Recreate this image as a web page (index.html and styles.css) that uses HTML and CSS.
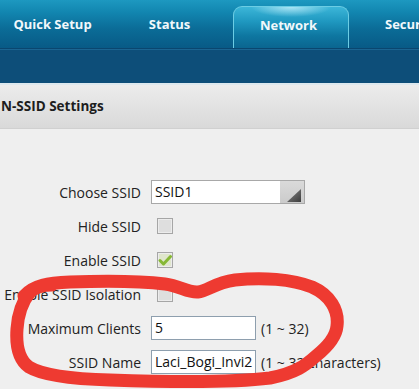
FILE: index.html
```html
<!DOCTYPE html>
<html>
<head>
<meta charset="utf-8">
<link rel="stylesheet" href="styles.css">
</head>
<body>
<div class="page">
  <nav class="nav">
    <div class="tab t1">Quick Setup</div>
    <div class="tab t2">Status</div>
    <div class="tab t3 active">Network</div>
    <div class="tab t4">Security</div>
  </nav>
  <div class="navline"></div>
  <div class="subbar"></div>
  <div class="sepline"></div>
  <div class="header">N-SSID Settings</div>
  <div class="content">
    <form class="form">
      <label class="lbl">Choose SSID</label>
      <div class="ctl">
        <div class="select">
          <span class="sel-val">SSID1</span>
          <span class="sel-btn"><svg width="14" height="13" viewBox="0 0 14 13"><defs><linearGradient id="tg" x1="0" y1="0" x2="1" y2="1"><stop offset="0" stop-color="#8a8a8a"/><stop offset="1" stop-color="#3c3c3c"/></linearGradient></defs><polygon points="14,0 14,13 0,13" fill="url(#tg)"/></svg></span>
        </div>
      </div>

      <label class="lbl">Hide SSID</label>
      <div class="ctl"><span class="cb"></span></div>

      <label class="lbl">Enable SSID</label>
      <div class="ctl"><span class="cb checked"><svg width="14" height="14" viewBox="0 0 14 14"><path d="M2 7.5 L5.5 11 L12.5 3.5" fill="none" stroke="#86b834" stroke-width="3" stroke-linecap="round" stroke-linejoin="round"/></svg></span></div>

      <label class="lbl">Enable SSID Isolation</label>
      <div class="ctl"><span class="cb"></span></div>

      <label class="lbl">Maximum Clients</label>
      <div class="ctl"><span class="inp">5</span><span class="hint">(1 ~ 32)</span></div>

      <label class="lbl">SSID Name</label>
      <div class="ctl"><span class="inp">Laci_Bogi_Invi2</span><span class="hint">(1 ~ 32 characters)</span></div>
    </form>
  </div>
  <svg class="scribble" width="419" height="389" viewBox="0 0 419 389">
    <path d="M24 296 C 34 285, 48 283, 70 282 C 100 281, 140 281, 165 284 C 180 286, 188 293, 198 292 C 208 291, 214 283, 235 280 C 262 277, 292 279, 312 287 C 330 295, 339 310, 337 326 C 336 338, 326 348, 316 356 C 306 365, 296 373, 270 378 C 230 383, 170 382, 110 380 C 75 379, 42 375, 29 367 C 18 359, 16 343, 17 329 C 18 313, 22 302, 30 292 C 36 287, 44 285, 52 285" fill="none" stroke="#ee3a31" stroke-width="13" stroke-linecap="round" stroke-linejoin="round"/>
  </svg>
</div>
</body>
</html>
```

FILE: styles.css
```css
html, body {
  margin: 0;
  padding: 0;
  background: #efefef;
}
.page {
  position: relative;
  width: 419px;
  height: 389px;
  overflow: hidden;
  font-family: "Open Sans", "DejaVu Sans", sans-serif;
}
.nav {
  height: 48px;
  display: flex;
  align-items: stretch;
  margin-left: -6px;
  background: linear-gradient(#1d98c0 0%, #1286b0 25%, #0b6c97 60%, #085a86 100%);
  white-space: nowrap;
}
.tab {
  flex: none;
  width: 117px;
  text-align: center;
  color: #f2f8fb;
  font-weight: 700;
  font-size: 13px;
  line-height: 14px;
  padding-top: 17px;
  box-sizing: border-box;
}
.t3 {
  width: 116px;
  margin-left: 5px;
  padding-right: 5px;
}
.t4 {
  padding-left: 8px;
}
.active {
  margin-top: 6px;
  padding-top: 11px;
  border-radius: 9px 9px 0 0;
  border: 1px solid #6ccde4;
  border-bottom: none;
  background:
    radial-gradient(ellipse 40px 10px at 50% 0, rgba(210,245,255,0.75), rgba(210,245,255,0) 100%),
    linear-gradient(#3cb6d8 0%, #1f98c0 35%, #0e77a1 70%, #0a6590 100%);
}
.navline {
  height: 2px;
  background: linear-gradient(#0a466f 0, #0a466f 50%, #1b6592 50%);
}
.subbar {
  height: 33px;
  background: #0d4e79;
}
.sepline {
  height: 2px;
  background: #dde8ee;
}
.header {
  height: 43px;
  line-height: 43px;
  padding-left: 1px;
  font-weight: 700;
  font-size: 13.5px;
  color: #1d1d1d;
  background: linear-gradient(#ececec, #d9d9d9);
  border-bottom: 1px solid #d0d0d0;
}
.content {
  padding-top: 46px;
}
.form {
  margin: 0;
  display: grid;
  grid-template-columns: 141px auto;
  grid-auto-rows: 34px;
  column-gap: 10px;
  align-items: center;
}
.lbl {
  text-align: right;
  font-size: 14px;
  color: #222;
  white-space: nowrap;
}
.ctl {
  display: flex;
  align-items: center;
  white-space: nowrap;
}
.select {
  width: 154px;
  height: 24px;
  box-sizing: border-box;
  border: 1px solid #a8a8a8;
  background: #fff;
  display: flex;
  align-items: stretch;
}
.sel-val {
  flex: 1;
  padding-left: 3px;
  font-size: 14px;
  line-height: 22px;
  color: #111;
}
.sel-btn {
  width: 21px;
  background: linear-gradient(#dadada, #cbcbcb);
  display: flex;
  align-items: flex-end;
  justify-content: flex-end;
  padding: 0 3px 1px 0;
}
.cb {
  width: 16px;
  height: 16px;
  box-sizing: border-box;
  margin-left: 6px;
  border: 1px solid #a6a6a6;
  background: #dedede;
  box-shadow: inset 0 0 0 1px #ececec;
  display: flex;
  align-items: center;
  justify-content: center;
}
.cb.checked {
  background: #dfe6cc;
}
.inp {
  width: 105px;
  height: 24px;
  box-sizing: border-box;
  border: 1px solid #8e9fae;
  background: #fff;
  font-size: 14px;
  line-height: 22px;
  padding-left: 3px;
  color: #111;
  overflow: hidden;
}
.hint {
  margin-left: 5px;
  font-size: 14px;
  color: #222;
}
.scribble {
  position: absolute;
  left: 0;
  top: 0;
  pointer-events: none;
}
```
